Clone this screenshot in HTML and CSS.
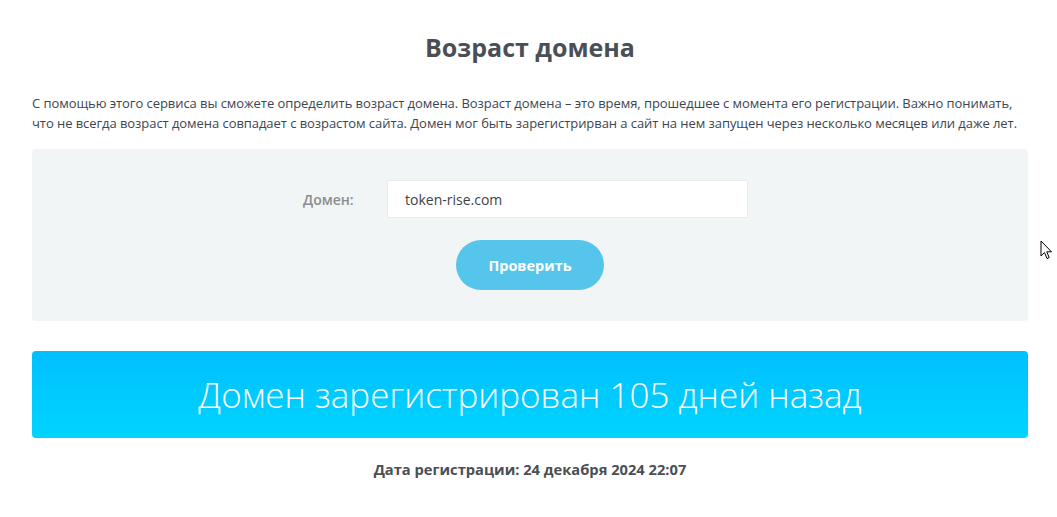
FILE: index.html
```html
<!DOCTYPE html>
<html lang="ru">
<head>
    <meta charset="UTF-8">
    <meta name="viewport" content="width=device-width, initial-scale=1.0">
    <title>Возраст домена</title>
    <link rel="stylesheet" href="styles.css">
</head>
<body>

    <main class="page">

        <h1 class="title">Возраст домена</h1>

        <p class="intro">С помощью этого сервиса вы сможете определить возраст домена. Возраст домена – это время, прошедшее с момента его регистрации. Важно понимать, что не всегда возраст домена совпадает с возрастом сайта. Домен мог быть зарегистрирван а сайт на нем запущен через несколько месяцев или даже лет.</p>

        <form class="checkForm">
            <div class="formRow">
                <label class="formLabel" for="domain">Домен:</label>
                <input id="domain" class="formInput" type="text" value="token-rise.com">
            </div>
            <button class="btnCheck" type="button">Проверить</button>
        </form>

        <div class="result">Домен зарегистрирован 105 дней назад</div>

        <p class="regDate">Дата регистрации: 24 декабря 2024 22:07</p>

    </main>

    <svg class="cursor" width="13" height="21" viewBox="0 0 13 21">
        <path d="M1 1 L1 16 L4.5 12.5 L7 18.5 L9.2 17.6 L6.8 11.8 L11.5 11.8 Z" fill="#fff" stroke="#000" stroke-width="1"/>
    </svg>

</body>
</html>
```

FILE: styles.css
```css
body{
    margin: 0;
    font-family: "Open Sans", "Liberation Sans", sans-serif;
    color: #3d4650;
    background: #fff;
}

.page{
    width: 996px;
    margin-left: 32px;
    padding-top: 32px;
}

.title{
    margin: 0;
    text-align: center;
    font-size: 25px;
    line-height: 30px;
    font-weight: 700;
    color: #4a4f56;
}

.intro{
    margin: 31px 0 0;
    font-size: 13px;
    line-height: 20px;
    letter-spacing: -0.06px;
    color: #3b4652;
}

.checkForm{
    margin-top: 16px;
    background: #f2f5f6;
    border-radius: 4px;
    padding: 31px 0 31px;
    display: flex;
    flex-direction: column;
    align-items: center;
}

.formRow{
    display: flex;
    align-items: center;
    margin-right: 9px;
}

.formLabel{
    width: 84px;
    font-size: 14px;
    font-weight: 600;
    color: #8a8d90;
}

.formInput{
    width: 361px;
    height: 38px;
    box-sizing: border-box;
    border: 1px solid #e9ecee;
    border-radius: 2px;
    background: #fff;
    padding: 0 17px;
    font-family: "Open Sans", "Liberation Sans", sans-serif;
    font-size: 14px;
    color: #3d4248;
    outline: none;
}

.btnCheck{
    margin-top: 22px;
    width: 148px;
    height: 50px;
    border: none;
    border-radius: 25px;
    background: #56c5ec;
    color: #fff;
    font-family: "Open Sans", "Liberation Sans", sans-serif;
    font-size: 14.5px;
    font-weight: 700;
}

.result{
    margin-top: 30px;
    height: 87px;
    border-radius: 4px;
    background: linear-gradient(#00c0ff, #00d4ff);
    color: #fff;
    display: flex;
    align-items: center;
    justify-content: center;
    font-size: 35px;
    font-weight: 300;
}

.regDate{
    margin: 21px 0 0;
    text-align: center;
    font-size: 14.7px;
    font-weight: 700;
    color: #4a4f56;
}

.cursor{
    position: absolute;
    left: 1040px;
    top: 240px;
}
```
